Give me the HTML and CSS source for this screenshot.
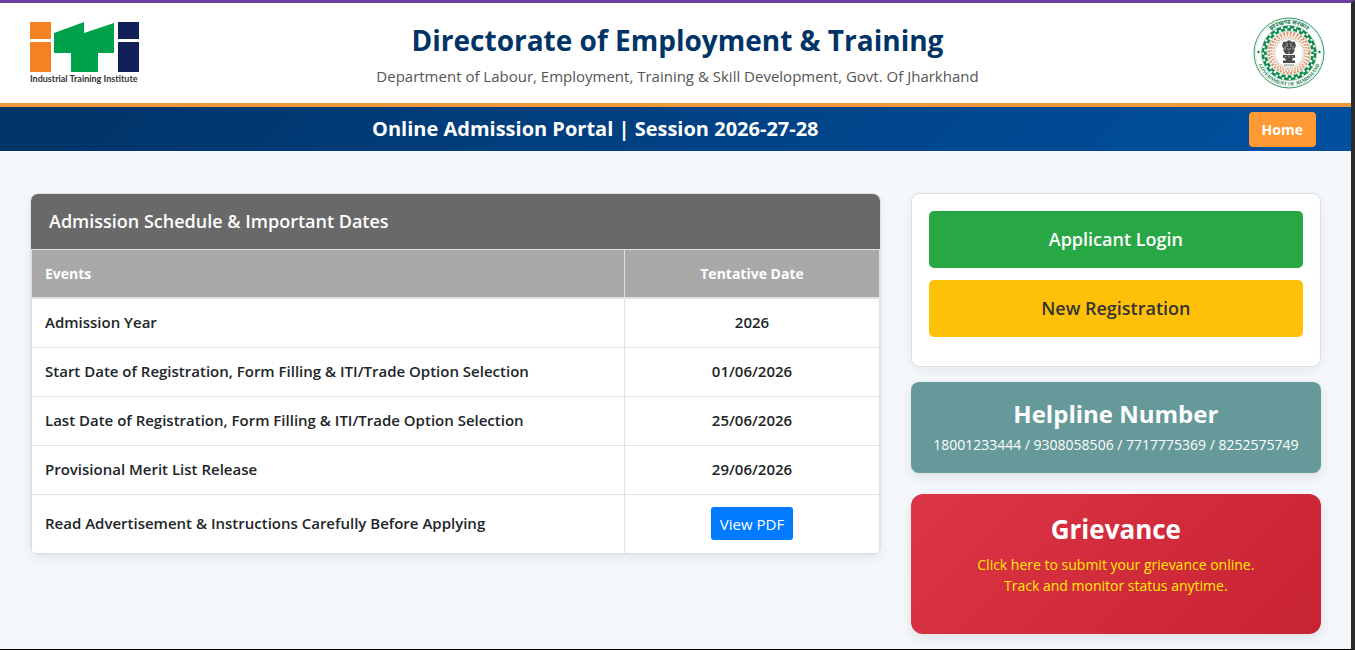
FILE: index.html
```
<!DOCTYPE html>
<html lang="en">

<head>
  <meta charset="UTF-8">
  <meta name="viewport" content="width=device-width, initial-scale=1">
  <title>Directorate of Employment &amp; Training</title>
  <link rel="stylesheet" href="styles.css">
</head>

<body>
  <div class="page">
    <header class="header">
      <svg class="logo" viewBox="0 0 110 64" role="img" aria-label="Industrial Training Institute">
        <g fill="#f58220">
          <rect x="0" y="0" width="21" height="17" />
          <rect x="0" y="20" width="21" height="30" />
        </g>
        <path fill="#00a14b" d="M24 11 L54 0 V11 L84 1 V31 H68 V50 H41 V31 H24 Z" />
        <g fill="#12205a">
          <rect x="88" y="0" width="21" height="17" />
          <rect x="88" y="20" width="21" height="30" />
        </g>
        <text class="logo-text" x="0" y="60">Industrial Training Institute</text>
      </svg>

      <div class="header-title">
        <h1>Directorate of Employment &amp; Training</h1>
        <p>Department of Labour, Employment, Training &amp; Skill Development, Govt. Of Jharkhand</p>
      </div>

      <svg class="emblem" viewBox="0 0 72 72" role="img" aria-label="Government of Jharkhand">
        <defs>
          <path id="arcTop" d="M7 36 A29 29 0 0 1 65 36" />
          <path id="arcBottom" d="M3.5 36 A32.5 32.5 0 0 0 68.5 36" />
        </defs>
        <g fill="none">
          <circle cx="36" cy="36" r="35" stroke="#2f9565" stroke-width="1" fill="#fff" />
          <circle cx="36" cy="36" r="33.5" stroke="#b5dcc8" stroke-width="0.5" />
          <circle cx="36" cy="36" r="27.5" stroke="#5fae85" stroke-width="0.7" />
          <circle cx="36" cy="36" r="26" stroke="#0f8a4c" stroke-width="2.4" stroke-dasharray="4.8 2" />
          <circle cx="36" cy="36" r="23.6" stroke="#0f8a4c" stroke-width="2.6" stroke-dasharray="4 2.2" stroke-dashoffset="3" />
          <circle cx="36" cy="36" r="21.6" stroke="#7dbb98" stroke-width="0.6" />
          <circle cx="36" cy="36" r="20" stroke="#e58a5c" stroke-width="2" stroke-dasharray="2 1.5" />
          <circle cx="36" cy="36" r="17.8" stroke="#e0966f" stroke-width="2" stroke-dasharray="1.5 1.5" />
          <circle cx="36" cy="36" r="15.8" stroke="#e5a07c" stroke-width="1.2" stroke-dasharray="1.5 1" />
          <circle cx="36" cy="36" r="14.3" stroke="#b9c9be" stroke-width="0.7" />
        </g>
        <text class="emblem-text"><textPath href="#arcTop" startOffset="50%" text-anchor="middle">झारखण्ड सरकार</textPath></text>
        <text class="emblem-text emblem-text-en"><textPath href="#arcBottom" startOffset="50%" text-anchor="middle">GOVERNMENT OF JHARKHAND</textPath></text>
        <g fill="#12774a">
          <circle cx="5.5" cy="35" r="1.2" />
          <circle cx="66.5" cy="35" r="1.2" />
        </g>
        <!-- lion capital -->
        <g fill="#4b4b4b">
          <path d="M33 25 Q36 21.5 39 25 Q42 23.5 42.5 27 Q43.5 30 41.5 31 L41.5 34 L39.5 37 H32.5 L30.5 34 L30.5 31 Q28.5 30 29.5 27 Q30 23.5 33 25 Z" />
          <rect x="30" y="38" width="12" height="3" />
          <path d="M32 41 H40 L39 43.5 H42 V46 H30 V43.5 H33 Z" />
        </g>
        <g stroke="#ccc" stroke-width="0.7" fill="none">
          <path d="M34 26 V30 M38 26 V30 M34 31.5 Q36 33.5 38 31.5 M36 34 V37 M32 29 V33 M40 29 V33" />
          <path d="M32.5 39 V40.5 M36 38.5 V40.5 M39.5 39 V40.5" />
        </g>
        <path d="M31 48 H41" stroke="#888" stroke-width="1" />
      </svg>
    </header>

    <nav class="navbar">
      <h2>Online Admission Portal | Session 2026-27-28</h2>
      <a href="#" class="btn-home">Home</a>
    </nav>

    <main class="content">
      <section class="schedule">
        <h3>Admission Schedule &amp; Important Dates</h3>
        <table>
          <thead>
            <tr>
              <th>Events</th>
              <th>Tentative Date</th>
            </tr>
          </thead>
          <tbody>
            <tr>
              <td>Admission Year</td>
              <td>2026</td>
            </tr>
            <tr>
              <td>Start Date of Registration, Form Filling &amp; ITI/Trade Option Selection</td>
              <td>01/06/2026</td>
            </tr>
            <tr>
              <td>Last Date of Registration, Form Filling &amp; ITI/Trade Option Selection</td>
              <td>25/06/2026</td>
            </tr>
            <tr>
              <td>Provisional Merit List Release</td>
              <td>29/06/2026</td>
            </tr>
            <tr>
              <td>Read Advertisement &amp; Instructions Carefully Before Applying</td>
              <td><a href="#" class="btn-pdf">View PDF</a></td>
            </tr>
          </tbody>
        </table>
      </section>

      <aside class="sidebar">
        <div class="login-box">
          <a href="#" class="btn btn-login">Applicant Login</a>
          <a href="#" class="btn btn-register">New Registration</a>
        </div>

        <div class="helpline">
          <h3>Helpline Number</h3>
          <p>18001233444 / 9308058506 / 7717775369 / 8252575749</p>
        </div>

        <a href="#" class="grievance">
          <h3>Grievance</h3>
          <p>Click here to submit your grievance online.<br>Track and monitor status anytime.</p>
        </a>
      </aside>
    </main>
  </div>
</body>

</html>
```

FILE: styles.css
```
* {
  box-sizing: border-box;
}

body {
  margin: 0;
  font-family: "Open Sans", "Noto Sans", sans-serif;
  font-size: 15px;
  line-height: 24px;
  color: #212529;
  background: #f4f8fb;
}

h1,
h2,
h3,
p {
  margin: 0;
}

a {
  text-decoration: none;
}

.page {
  min-height: 100vh;
  border-top: 3px solid #6b3fa0;
  border-right: 4px solid #2b2b2b;
  border-bottom: 1px solid #000;
}

/* header */
.header {
  display: grid;
  grid-template-columns: 1fr auto 1fr;
  align-items: center;
  height: 104px;
  padding: 0 26px 0 30px;
  background: #fff;
  border-bottom: 4px solid #f0983a;
}

.logo {
  width: 110px;
  height: 64px;
  margin-top: 2px;
}

.logo-text {
  font-family: Lato, sans-serif;
  font-size: 9px;
  font-weight: 700;
  fill: #333;
}

.header-title {
  padding-top: 4px;
  text-align: center;
}

.header-title h1 {
  font-size: 28px;
  line-height: 36px;
  font-weight: 700;
  color: #003366;
}

.header-title p {
  margin-top: 6px;
  color: #555;
}

.emblem {
  width: 72px;
  height: 72px;
  justify-self: end;
}

.emblem-text {
  font-family: "Noto Sans", sans-serif;
  font-size: 6px;
  font-weight: 700;
  fill: #12774a;
}

.emblem-text-en {
  font-family: "Liberation Serif", serif;
  font-size: 5px;
}

/* navbar */
.navbar {
  display: flex;
  align-items: center;
  height: 44px;
  padding: 0 35px;
  background: linear-gradient(135deg, #003366, #0050a0);
}

.navbar h2 {
  flex: 1;
  padding-right: 93px;
  text-align: center;
  font-size: 20px;
  font-weight: 700;
  color: #fff;
}

.btn-home {
  padding: 6px 13px 5px;
  font-size: 14px;
  font-weight: 700;
  color: #fff;
  background: #ff9933;
  border-radius: 4px;
}

/* content */
.content {
  display: grid;
  grid-template-columns: minmax(0, 850fr) minmax(0, 410fr);
  gap: 30px;
  align-items: start;
  padding: 42px 30px 15px;
}

.schedule {
  overflow: hidden;
  background: #fff;
  border: 1px solid #dee2e6;
  border-radius: 8px;
  box-shadow: 0 4px 12px rgba(0, 0, 0, 0.06);
}

.schedule h3 {
  padding: 15px 18px 16px;
  font-size: 18px;
  font-weight: 600;
  color: #fff;
  background: #696969;
}

.schedule table {
  width: 100%;
  border-collapse: collapse;
}

.schedule th,
.schedule td {
  padding: 11px 13px 13px;
  border: 1px solid #dee2e6;
  font-weight: 600;
  text-align: center;
}

.schedule th {
  padding: 12px 13px 11px;
  font-size: 14px;
  font-weight: 700;
  color: #fff;
  background: #a9a9a9;
  border-bottom-width: 2px;
}

.schedule th:first-child,
.schedule td:first-child {
  width: 70%;
  text-align: left;
}

.btn-pdf {
  display: inline-block;
  margin-top: 1px;
  padding: 5px 9px 4px;
  font-weight: 400;
  color: #fff;
  background: #007bff;
  border-radius: 3px;
}

/* sidebar */
.login-box {
  display: flex;
  flex-direction: column;
  gap: 12px;
  padding: 17px 17px 29px;
  background: #fff;
  border: 1px solid #dcdfea;
  border-radius: 8px;
  box-shadow: 0 4px 12px rgba(0, 0, 0, 0.06);
}

.btn {
  padding: 16px;
  font-size: 18px;
  line-height: 25px;
  font-weight: 600;
  text-align: center;
  border-radius: 5px;
}

.btn-login {
  color: #fff;
  background: #28a745;
}

.btn-register {
  color: #333;
  background: #ffc107;
}

.helpline,
.grievance {
  display: block;
  text-align: center;
  color: #fff;
  box-shadow: 0 4px 12px rgba(0, 0, 0, 0.1);
}

.helpline {
  margin-top: 15px;
  padding: 16px 10px;
  background: #669999;
  border-radius: 8px;
}

.helpline h3 {
  font-size: 24px;
  line-height: 32px;
}

.helpline p {
  margin-top: 3px;
  font-size: 14px;
}

.grievance {
  margin-top: 21px;
  padding: 19px 10px 38px;
  background: linear-gradient(135deg, #dc3545, #c82333);
  border-radius: 12px;
}

.grievance h3 {
  font-size: 26px;
  line-height: 32px;
}

.grievance p {
  margin-top: 9px;
  font-size: 14px;
  line-height: 21px;
  color: #ffeb00;
}
```
